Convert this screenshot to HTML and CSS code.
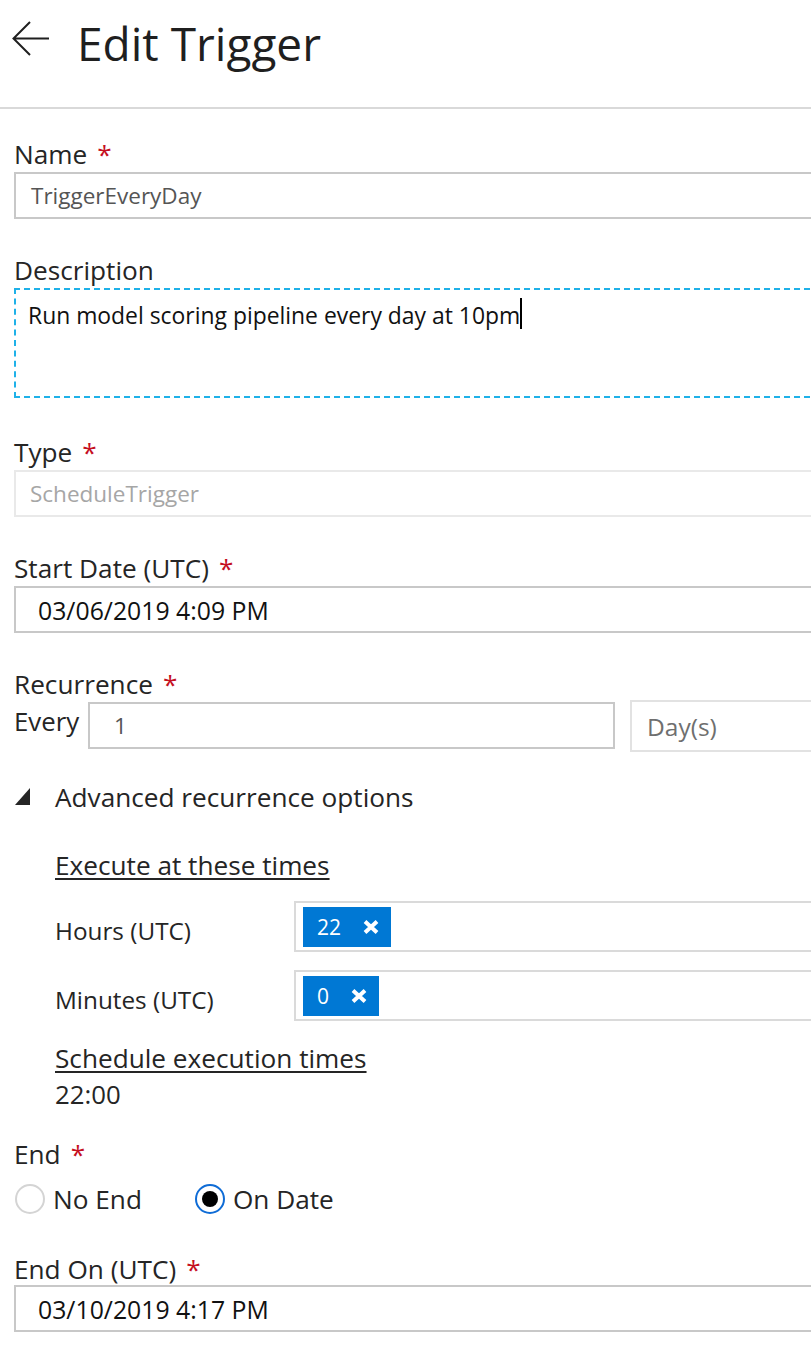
FILE: index.html
```html
<!DOCTYPE html>
<html lang="en">
<head>
<meta charset="utf-8">
<title>Edit Trigger</title>
<link rel="stylesheet" href="styles.css">
</head>
<body>
<div class="page">
  <header class="header">
    <span class="back" aria-label="Back">
      <svg width="38" height="36" viewBox="0 0 38 36"><path d="M37 17.5H1.5M18 1L1.5 17.5L18 34" fill="none" stroke="#1f1f1f" stroke-width="2"/></svg>
    </span>
    <h1 class="title">Edit Trigger</h1>
  </header>
  <main class="form">
    <section class="field">
      <div class="label">Name<span class="req">*</span></div>
      <div class="input input-name">TriggerEveryDay</div>
    </section>
    <section class="field field-desc">
      <div class="label">Description</div>
      <div class="textarea">Run model scoring pipeline every day at 10pm<span class="caret"></span></div>
    </section>
    <section class="field">
      <div class="label">Type<span class="req">*</span></div>
      <div class="input input-disabled">ScheduleTrigger</div>
    </section>
    <section class="field">
      <div class="label">Start Date (UTC)<span class="req">*</span></div>
      <div class="input input-date">03/06/2019 4:09 PM</div>
    </section>
    <section class="field field-rec">
      <div class="label label-tight">Recurrence<span class="req">*</span></div>
      <div class="rec-row">
        <div class="every">Every</div>
        <div class="input input-interval">1</div>
        <div class="select">Day(s)</div>
      </div>
    </section>
    <div class="adv-toggle">
      <svg class="tri" width="15" height="17" viewBox="0 0 15 17"><path d="M15 0V17H0Z" fill="#252525"/></svg>
      <span>Advanced recurrence options</span>
    </div>
    <div class="adv">
      <div class="sub-head">Execute at these times</div>
      <div class="time-row">
        <div class="time-label">Hours (UTC)</div>
        <div class="tag-box">
          <span class="chip">22<svg class="chip-x" width="16" height="14" viewBox="0 0 16 14"><path d="M2 1.5L14 12.5M14 1.5L2 12.5" stroke="#fff" stroke-width="4"/></svg></span>
        </div>
      </div>
      <div class="time-row time-row-2">
        <div class="time-label">Minutes (UTC)</div>
        <div class="tag-box">
          <span class="chip">0<svg class="chip-x" width="16" height="14" viewBox="0 0 16 14"><path d="M2 1.5L14 12.5M14 1.5L2 12.5" stroke="#fff" stroke-width="4"/></svg></span>
        </div>
      </div>
      <div class="sub-head sched-head">Schedule execution times</div>
      <div class="sched-value">22:00</div>
    </div>
    <section class="end">
      <div class="label">End<span class="req">*</span></div>
      <div class="radio-row">
        <div class="radio-option"><span class="radio"></span><span>No End</span></div>
        <div class="radio-option"><span class="radio radio-checked"></span><span>On Date</span></div>
      </div>
    </section>
    <section class="field end-on">
      <div class="label label-tight">End On (UTC)<span class="req">*</span></div>
      <div class="input input-date">03/10/2019 4:17 PM</div>
    </section>
  </main>
</div>
</body>
</html>
```

FILE: styles.css
```css
* { box-sizing: border-box; }
html, body {
  margin: 0;
  padding: 0;
  overflow: hidden;
  background: #ffffff;
}
body {
  font-family: "Open Sans", "Noto Sans", sans-serif;
  color: #252525;
  width: 811px;
}
.header {
  display: flex;
  align-items: flex-start;
  height: 109px;
  padding: 15px 0 0 12px;
  border-bottom: 2px solid #d9d9d9;
}
.back {
  display: block;
  width: 38px;
  height: 36px;
  margin-top: 6px;
}
.back svg { display: block; }
.title {
  margin: 0 0 0 27px;
  font-size: 46px;
  font-weight: 400;
  line-height: 56px;
  color: #1f1f1f;
}
.form {
  width: 840px;
  padding: 30px 0 40px 14px;
}
.label {
  font-size: 26.2px;
  line-height: 30px;
  margin-bottom: 3px;
  color: #252525;
}
.label-tight { margin-bottom: 1px; }
.req {
  color: #c50f1f;
  margin-left: 10px;
}
.field { margin-bottom: 36px; }
.field-desc { margin-bottom: 39px; }
.input {
  display: flex;
  align-items: center;
  height: 47px;
  border: 2px solid #c8c8c8;
  font-size: 22.5px;
  white-space: nowrap;
}
.input-name {
  padding-left: 15px;
  color: #555555;
}
.input-disabled {
  border-color: #e9e9e9;
  color: #a6a6a6;
  padding-left: 14px;
}
.input-date {
  padding-left: 22px;
  color: #111111;
  font-size: 24.8px;
}
.textarea {
  height: 110px;
  border: 2px dashed #1fb1e8;
  padding: 8px 12px;
  font-size: 22.9px;
  line-height: 30px;
  color: #111111;
}
.caret {
  display: inline-block;
  width: 2px;
  height: 31px;
  background: #000000;
  vertical-align: -5px;
}
.field-rec { margin-bottom: 30px; }
.rec-row {
  display: flex;
  align-items: flex-start;
}
.every {
  width: 74px;
  margin-top: 6px;
  font-size: 25.8px;
  line-height: 30px;
}
.input-interval {
  width: 527px;
  margin-top: 2px;
  padding-left: 24px;
  color: #555555;
}
.select {
  flex: 1;
  display: flex;
  align-items: center;
  height: 52px;
  margin-left: 15px;
  padding-left: 15px;
  border: 2px solid #e2e2e2;
  color: #6f6f6f;
  font-size: 24.5px;
}
.adv-toggle {
  display: flex;
  align-items: flex-start;
  font-size: 26.2px;
  line-height: 30px;
}
.tri {
  display: block;
  margin: 6px 25px 0 1px;
}
.adv {
  padding-left: 41px;
  margin-top: 38px;
}
.sub-head {
  font-size: 26.2px;
  line-height: 30px;
  text-decoration: underline;
  text-decoration-thickness: 2px;
  text-underline-offset: 3px;
}
.time-row {
  display: flex;
  align-items: flex-start;
  margin-top: 21px;
}
.time-row-2 { margin-top: 18px; }
.time-label {
  width: 239px;
  padding-top: 15px;
  font-size: 24.3px;
  line-height: 30px;
}
.tag-box {
  flex: 1;
  display: flex;
  align-items: flex-start;
  height: 51px;
  padding: 4px 7px;
  border: 2px solid #dadada;
}
.chip {
  display: inline-flex;
  align-items: center;
  gap: 22px;
  height: 40px;
  padding: 0 12px 0 14px;
  background: #0078d4;
  color: #ffffff;
  font-size: 21px;
}
.chip-x { display: block; }
.sched-head { margin-top: 22px; }
.sched-value {
  margin-top: 6px;
  font-size: 25.8px;
  line-height: 30px;
}
.end { margin-top: 30px; }
.end .label { margin-bottom: 0; }
.radio-row {
  display: flex;
  align-items: center;
  gap: 52px;
  margin-top: 15px;
}
.radio-option {
  display: flex;
  align-items: center;
  gap: 8px;
  font-size: 26.2px;
  line-height: 30px;
}
.radio {
  display: flex;
  align-items: center;
  justify-content: center;
  width: 30px;
  height: 30px;
  margin-left: 1px;
  border: 2px solid #d4d4d4;
  border-radius: 50%;
}
.radio-checked { border-color: #0f6cd6; }
.radio-checked::after {
  content: "";
  width: 16px;
  height: 16px;
  border-radius: 50%;
  background: #000000;
}
.end-on { margin-top: 40px; }
```
